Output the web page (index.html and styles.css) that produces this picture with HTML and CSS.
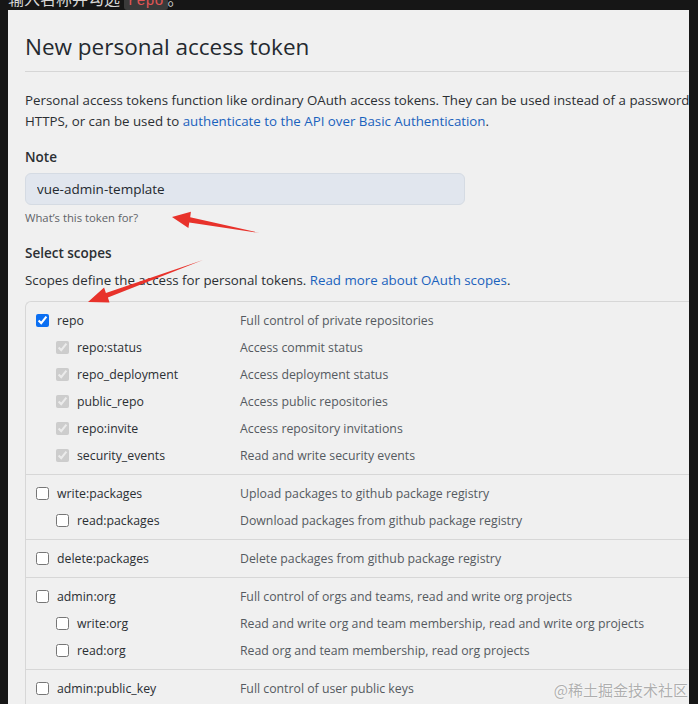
FILE: index.html
```html
<!DOCTYPE html>
<html lang="en">
<head>
<meta charset="utf-8">
<title>New personal access token</title>
<link rel="stylesheet" href="styles.css">
</head>
<body>
<div class="top"><div class="top-text">输入名称并勾选 <code class="code">repo</code>。</div></div>
<div class="panel">
  <h1 class="title">New personal access token</h1>
  <p class="intro">Personal access tokens function like ordinary OAuth access tokens. They can be used instead of a password for Git over<br>HTTPS, or can be used to <a class="link">authenticate to the API over Basic Authentication</a>.</p>
  <div class="label note-label">Note</div>
  <input class="note-input" type="text" value="vue-admin-template" readonly>
  <div class="hint">What’s this token for?</div>
  <div class="label scopes-label">Select scopes</div>
  <p class="intro scopes-intro">Scopes define the access for personal tokens. <a class="link">Read more about OAuth scopes</a>.</p>
  <div class="scopes">
    <div class="group">
      <div class="row"><label class="name"><input class="cb" type="checkbox" checked>repo</label><span class="desc">Full control of private repositories</span></div>
      <div class="row sub"><label class="name"><input class="cb" type="checkbox" checked disabled>repo:status</label><span class="desc">Access commit status</span></div>
      <div class="row sub"><label class="name"><input class="cb" type="checkbox" checked disabled>repo_deployment</label><span class="desc">Access deployment status</span></div>
      <div class="row sub"><label class="name"><input class="cb" type="checkbox" checked disabled>public_repo</label><span class="desc">Access public repositories</span></div>
      <div class="row sub"><label class="name"><input class="cb" type="checkbox" checked disabled>repo:invite</label><span class="desc">Access repository invitations</span></div>
      <div class="row sub"><label class="name"><input class="cb" type="checkbox" checked disabled>security_events</label><span class="desc">Read and write security events</span></div>
    </div>
    <div class="group">
      <div class="row"><label class="name"><input class="cb" type="checkbox">write:packages</label><span class="desc">Upload packages to github package registry</span></div>
      <div class="row sub"><label class="name"><input class="cb" type="checkbox">read:packages</label><span class="desc">Download packages from github package registry</span></div>
    </div>
    <div class="group">
      <div class="row"><label class="name"><input class="cb" type="checkbox">delete:packages</label><span class="desc">Delete packages from github package registry</span></div>
    </div>
    <div class="group">
      <div class="row"><label class="name"><input class="cb" type="checkbox">admin:org</label><span class="desc">Full control of orgs and teams, read and write org projects</span></div>
      <div class="row sub"><label class="name"><input class="cb" type="checkbox">write:org</label><span class="desc">Read and write org and team membership, read and write org projects</span></div>
      <div class="row sub"><label class="name"><input class="cb" type="checkbox">read:org</label><span class="desc">Read org and team membership, read org projects</span></div>
    </div>
    <div class="group">
      <div class="row"><label class="name"><input class="cb" type="checkbox">admin:public_key</label><span class="desc">Full control of user public keys</span></div>
    </div>
  </div>
</div>
<svg class="arrows" width="698" height="704" viewBox="0 0 698 704">
  <polygon points="172,217 190.9,211.8 190.2,217.2 260,233 189.3,222.4 188.4,228" fill="#e8322b"/>
  <polygon points="88,302 104.1,287.6 105.9,292.9 203,260 107.9,297.4 109.5,302.6" fill="#e8322b"/>
</svg>
<div class="watermark">@稀土掘金技术社区</div>
</body>
</html>
```
FILE: styles.css
```css
html, body {
  margin: 0;
  padding: 0;
}
body {
  background: #161616;
  width: 698px;
  height: 704px;
  overflow: hidden;
  position: relative;
  font-family: "Open Sans", "Noto Sans", sans-serif;
  color: #24292f;
}
.top {
  height: 10px;
  overflow: hidden;
  padding-left: 8px;
}
.top-text {
  margin-top: -11px;
  font-family: "Noto Sans CJK SC", sans-serif;
  font-size: 16px;
  line-height: 18px;
  color: #d8d8d8;
}
.code {
  font-family: "Liberation Mono", monospace;
  background: #3a3a3a;
  color: #e25555;
  padding: 0 4px;
  border-radius: 3px;
  font-size: 15px;
}
.panel {
  margin-left: 8px;
  width: 681px;
  height: 694px;
  box-sizing: border-box;
  background: #f0f0f0;
  padding: 22px 0 0 17px;
  overflow: hidden;
}
.title {
  margin: 0;
  font-size: 22.5px;
  font-weight: 400;
  line-height: 30px;
  padding-bottom: 9px;
  border-bottom: 1px solid #d6d6d6;
  color: #24292f;
  white-space: nowrap;
}
.intro {
  margin: 18px 0 0;
  font-size: 13.3px;
  line-height: 21px;
  white-space: nowrap;
  color: #2b2f33;
}
.link {
  color: #1a62bd;
  text-decoration: none;
}
.label {
  font-size: 13.5px;
  font-weight: 600;
  line-height: 20px;
  color: #2b2f33;
}
.note-label {
  margin-top: 15px;
}
.note-input {
  display: block;
  margin: 6px 0 0;
  width: 440px;
  height: 32px;
  box-sizing: border-box;
  border: 1px solid #d5dbe3;
  border-radius: 6px;
  background: #e1e6ee;
  padding: 0 11px;
  font-family: "Open Sans", "Noto Sans", sans-serif;
  font-size: 13.5px;
  color: #24292f;
  outline: none;
}
.hint {
  margin-top: 4px;
  font-size: 11.3px;
  line-height: 18px;
  color: #5f6368;
}
.scopes-label {
  margin-top: 16px;
}
.scopes-intro {
  margin-top: 7px;
}
.scopes {
  margin-top: 10px;
  width: 720px;
  border: 1px solid #d7d7d7;
  border-right: none;
  border-radius: 6px 0 0 0;
}
.group {
  padding: 5px 0;
}
.group + .group {
  border-top: 1px solid #d7d7d7;
}
.row {
  display: grid;
  grid-template-columns: 214px 1fr;
  height: 27px;
  align-items: center;
  font-size: 12.3px;
  white-space: nowrap;
}
.name {
  display: flex;
  align-items: center;
  gap: 8px;
  padding-left: 10px;
  color: #2b2f33;
}
.sub .name {
  padding-left: 30px;
}
.cb {
  margin: 0;
  width: 13px;
  height: 13px;
  accent-color: #0b6ff2;
}
.desc {
  color: #555a60;
}
.arrows {
  position: absolute;
  left: 0;
  top: 0;
  pointer-events: none;
}
.watermark {
  position: absolute;
  right: 10px;
  bottom: 4px;
  font-family: "Noto Sans CJK SC", sans-serif;
  font-size: 15px;
  line-height: 20px;
  color: rgba(150, 150, 150, 0.75);
  text-shadow: 0 0 2px #ffffff;
}
```
